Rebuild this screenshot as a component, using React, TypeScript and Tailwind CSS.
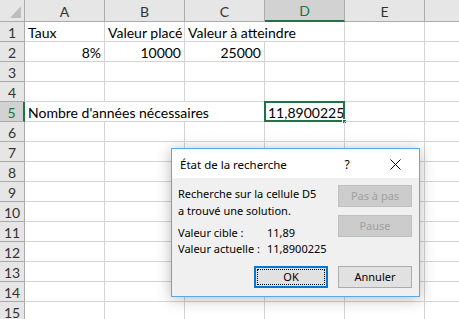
import React from "react";

const cols = ["A", "B", "C", "D", "E", ""];
const cellFont = { fontFamily: "Lato, 'Liberation Sans', sans-serif" } as React.CSSProperties;
const uiFont = { fontFamily: "'Noto Sans', 'Liberation Sans', sans-serif" } as React.CSSProperties;

type Cell = { text?: string; align?: "left" | "right"; noRight?: boolean; clip?: boolean; sel?: boolean };

function rowCells(r: number): Cell[] {
  const base: Cell[] = [{}, {}, {}, {}, {}, {}];
  if (r === 1) {
    base[0] = { text: "Taux" };
    base[1] = { text: "Valeur placé", clip: true };
    base[2] = { text: "Valeur à atteindre", noRight: true };
  }
  if (r === 2) {
    base[0] = { text: "8%", align: "right" };
    base[1] = { text: "10000", align: "right" };
    base[2] = { text: "25000", align: "right" };
  }
  if (r === 5) {
    base[0] = { text: "Nombre d'années nécessaires", noRight: true };
    base[1] = { noRight: true };
    base[3] = { text: "11,8900225", align: "right", sel: true };
  }
  return base;
}

export default function App() {
  const rows = Array.from({ length: 15 }, (_, i) => i + 1);
  return (
    <div className="relative w-[459px] h-[319px] overflow-hidden bg-white" style={cellFont}>
      <div className="grid grid-cols-[25px_80px_80px_80px_80px_80px_80px] grid-rows-[22px_repeat(15,20px)]">
        <div className="relative bg-[#e6e6e6] border-r border-b border-[#ababab]">
          <svg className="absolute right-[3px] bottom-[3px]" width="11" height="12" viewBox="0 0 11 12">
            <polygon points="11,0 11,12 0,12" fill="#bdbdbd" />
          </svg>
        </div>
        {cols.map((c, i) => (
          <div
            key={"h" + i}
            className={
              "flex items-center justify-center pt-[1px] text-[14px] border-r " +
              (c === "D"
                ? "bg-[#d2d2d2] text-[#217346] border-b-2 border-b-[#217346] border-r-[#ababab]"
                : "bg-[#e6e6e6] text-[#333] border-b border-[#ababab]")
            }
          >
            {c}
          </div>
        ))}
        {rows.map((r) => (
          <React.Fragment key={r}>
            <div
              className={
                "flex items-center justify-center pt-[2px] text-[14px] border-b " +
                (r === 5
                  ? "bg-[#d2d2d2] text-[#217346] border-r-2 border-r-[#217346] border-b-[#ababab]"
                  : "bg-[#e6e6e6] text-[#333] border-r border-[#ababab]")
              }
            >
              {r}
            </div>
            {rowCells(r).map((cell, ci) => (
              <div
                key={ci}
                className={
                  "relative border-b border-[#d4d4d4] text-[14px] leading-[19px] pt-[1px] px-[3px] whitespace-nowrap text-black " +
                  (cell.noRight ? "" : "border-r ") +
                  (cell.clip ? "overflow-hidden " : "overflow-visible z-[1] ") +
                  (cell.align === "right" ? "text-right" : "text-left")
                }
              >
                {cell.text}
                {cell.sel && (
                  <>
                    <div className="absolute -left-[1px] -top-[1px] -right-[1px] -bottom-[1px] border-2 border-[#217346]" />
                    <div className="absolute -right-[3px] -bottom-[3px] w-[5px] h-[5px] bg-[#217346] border border-white" />
                  </>
                )}
              </div>
            ))}
          </React.Fragment>
        ))}
      </div>

      <div
        className="absolute left-[171px] top-[148px] w-[249px] h-[149px] flex flex-col bg-[#f0f0f0] border border-[#5aa8e6] shadow-[0_2px_14px_rgba(0,0,0,0.28)] z-10 text-[11px] text-black whitespace-nowrap"
        style={uiFont}
      >
        <div className="h-[29px] bg-white flex items-center pl-[8px] pt-[2px]">
          <span className="flex-1 text-[11.5px]">État de la recherche</span>
          <span className="w-[12px] text-center mr-[37px] text-[12px]">?</span>
          <svg className="mr-[18px]" width="11" height="11" viewBox="0 0 11 11">
            <path d="M0.5 0.5 L10.5 10.5 M10.5 0.5 L0.5 10.5" stroke="#000" strokeWidth="1" />
          </svg>
        </div>
        <div className="flex-1 flex flex-col pl-[6px] pr-[7px] pb-[8px]">
          <div className="flex">
            <div className="flex-1 pt-[7px]">
              <div className="leading-[17px]">Recherche sur la cellule D5</div>
              <div className="leading-[17px]">a trouvé une solution.</div>
              <div className="mt-[6px] grid grid-cols-[89px_1fr] leading-[16px]">
                <span>Valeur cible :</span>
                <span>11,89</span>
                <span>Valeur actuelle :</span>
                <span>11,8900225</span>
              </div>
            </div>
            <div className="w-[74px] pt-[7px] flex flex-col gap-[8px]">
              <div className="h-[22px] flex items-center justify-center bg-[#cccccc] border border-[#bfbfbf] text-[#a0a0a0]">
                Pas à pas
              </div>
              <div className="h-[22px] flex items-center justify-center bg-[#cccccc] border border-[#bfbfbf] text-[#a0a0a0]">
                Pause
              </div>
            </div>
          </div>
          <div className="mt-auto flex justify-end gap-[10px]">
            <div className="w-[74px] h-[22px] p-[1px] border-2 border-[#0078d7] bg-[#e1e1e1]">
              <div className="h-full flex items-center justify-center border border-dotted border-black">OK</div>
            </div>
            <div className="w-[74px] h-[22px] flex items-center justify-center bg-[#e1e1e1] border border-[#adadad]">
              Annuler
            </div>
          </div>
        </div>
      </div>
    </div>
  );
}
